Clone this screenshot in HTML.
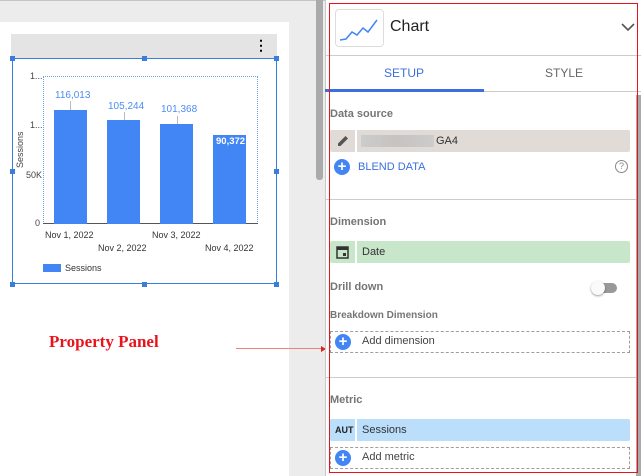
<!DOCTYPE html>
<html><head><meta charset="utf-8"><style>
*{margin:0;padding:0;box-sizing:border-box}
body{width:641px;height:476px;overflow:hidden;position:relative;background:#ececec;font-family:"Liberation Sans",Arial,sans-serif}
.a{position:absolute}
.t{position:absolute;white-space:nowrap}
.h{position:absolute;width:5px;height:5px;background:#3b7ddd}
.lbl{position:absolute;color:#757575;font-size:11px;font-weight:bold;left:330px;white-space:nowrap}
.plus{position:absolute;width:16px;height:16px;border-radius:50%;background:#4285f4;color:#fff;font-size:15px;line-height:16px;text-align:center;font-weight:bold}
.dash{position:absolute;left:330px;width:300px;height:22px;border:1px dashed #9e9e9e}
</style></head><body>
<div class="a" style="left:0;top:0;width:641px;height:1px;background:#c4c4c4"></div>
<div class="a" style="left:0;top:22px;width:289px;height:454px;background:#fff"></div>
<div class="a" style="left:316px;top:0;width:7px;height:180px;background:#aaa;border-radius:0 0 3px 3px"></div>
<!-- chart -->
<div class="a" style="left:11px;top:34px;width:266px;height:24px;background:#e4e4e4"></div>
<div class="t" style="left:254px;top:38px;font-size:14px;font-weight:bold;line-height:14px">⋮</div>
<div class="a" style="left:12px;top:58px;width:265px;height:226px;border:1px solid #3b7ddd"></div>
<div class="h" style="left:10px;top:56px"></div><div class="h" style="left:142px;top:56px"></div><div class="h" style="left:274px;top:56px"></div>
<div class="h" style="left:10px;top:169px"></div><div class="h" style="left:274px;top:169px"></div>
<div class="h" style="left:10px;top:282px"></div><div class="h" style="left:142px;top:282px"></div><div class="h" style="left:274px;top:282px"></div>
<div class="a" style="left:43px;top:76px;width:215px;height:148px;border:1px dotted #6fa0ee;border-bottom:none"></div>
<div class="a" style="left:43px;top:223px;width:215px;height:1px;background:#555"></div>
<div class="t" style="left:30px;top:71px;font-size:9px;color:#444">1...</div>
<div class="t" style="left:30px;top:120px;font-size:9px;color:#444">1...</div>
<div class="t" style="left:26px;top:170px;font-size:9px;color:#444">50K</div>
<div class="t" style="left:35px;top:218px;font-size:9px;color:#444">0</div>
<div class="t" style="left:2px;top:145px;width:36px;text-align:center;font-size:9px;color:#444;transform:rotate(-90deg)">Sessions</div>
<div class="a" style="left:54px;top:110px;width:33px;height:114px;background:#4285f4"></div>
<div class="a" style="left:107px;top:120px;width:33px;height:104px;background:#4285f4"></div>
<div class="a" style="left:160px;top:124px;width:33px;height:100px;background:#4285f4"></div>
<div class="a" style="left:213px;top:135px;width:33px;height:89px;background:#4285f4"></div>
<div class="a" style="left:70px;top:101px;width:1px;height:9px;background:#bbb"></div>
<div class="a" style="left:124px;top:112px;width:1px;height:8px;background:#bbb"></div>
<div class="a" style="left:177px;top:116px;width:1px;height:8px;background:#bbb"></div>
<div class="t" style="left:55px;top:90px;font-size:10px;color:#4c8df6">116,013</div>
<div class="t" style="left:108px;top:101px;font-size:10px;color:#4c8df6">105,244</div>
<div class="t" style="left:161px;top:104px;font-size:10px;color:#4c8df6">101,368</div>
<div class="t" style="left:216px;top:136px;font-size:9.5px;color:#fff;font-weight:bold">90,372</div>
<div class="t" style="left:45px;top:230px;font-size:9px;color:#333">Nov 1, 2022</div>
<div class="t" style="left:98px;top:243px;font-size:9px;color:#333">Nov 2, 2022</div>
<div class="t" style="left:152px;top:230px;font-size:9px;color:#333">Nov 3, 2022</div>
<div class="t" style="left:205px;top:243px;font-size:9px;color:#333">Nov 4, 2022</div>
<div class="a" style="left:43px;top:264px;width:18px;height:8px;background:#4285f4"></div>
<div class="t" style="left:65px;top:263px;font-size:9px;color:#333">Sessions</div>
<div class="t" style="left:49px;top:332px;font-family:'Liberation Serif',serif;font-weight:bold;font-size:17px;color:#e8141c">Property Panel</div>
<div class="a" style="left:236px;top:348px;width:86px;height:1px;background:#f08080"></div>
<div class="a" style="left:321px;top:346px;width:0;height:0;border-left:5px solid #e02020;border-top:3px solid transparent;border-bottom:3px solid transparent"></div>
<!-- panel -->
<div class="a" style="left:325px;top:0;width:316px;height:476px;background:#fff;border-left:1px solid #c8c8c8"></div>
<div class="a" style="left:636px;top:95px;width:5px;height:381px;background:#aaa"></div>
<div class="a" style="left:335px;top:9px;width:49px;height:38px;border:1px solid #ddd;border-radius:4px"></div>
<svg class="a" style="left:335px;top:9px" width="49" height="38"><polyline points="5,31 11,30 17,23 22,26 28,19 33,23 42,11" fill="none" stroke="#4285f4" stroke-width="1.5"/></svg>
<div class="t" style="left:390px;top:18px;font-size:16px;color:#222">Chart</div>
<svg class="a" style="left:621px;top:22px" width="14" height="10"><polyline points="1,2 7,8 13,2" fill="none" stroke="#555" stroke-width="1.6"/></svg>
<div class="a" style="left:325px;top:55px;width:316px;height:1px;background:#ccc"></div>
<div class="t" style="left:384px;top:66px;font-size:12px;color:#3b6fe0">SETUP</div>
<div class="t" style="left:545px;top:66px;font-size:12px;color:#666">STYLE</div>
<div class="a" style="left:325px;top:91px;width:316px;height:1px;background:#ccc"></div>
<div class="a" style="left:325px;top:89px;width:159px;height:3px;background:#3b6fe0"></div>
<div class="lbl" style="top:108px">Data source</div>
<div class="a" style="left:330px;top:130px;width:300px;height:22px;background:#e0dbd7;border-radius:2px"></div>
<div class="a" style="left:355px;top:130px;width:2px;height:22px;background:#fff"></div>
<div class="a" style="left:361px;top:135px;width:73px;height:12px;background:linear-gradient(90deg,#ccc,#c6c3c0,#ccc)"></div>
<svg class="a" style="left:336px;top:134px" width="14" height="14"><path d="M2 12 L2 9.5 L9.5 2 L12 4.5 L4.5 12 Z" fill="#555"/></svg>
<div class="t" style="left:436px;top:135px;font-size:11px;color:#333">GA4</div>
<div class="plus" style="left:334px;top:159px">+</div>
<div class="t" style="left:358px;top:161px;font-size:11px;color:#3b6fe0">BLEND DATA</div>
<div class="a" style="left:615px;top:160px;width:13px;height:13px;border:1px solid #888;border-radius:50%;font-size:9px;color:#888;text-align:center;line-height:11px">?</div>
<div class="a" style="left:325px;top:199px;width:311px;height:1px;background:#ccc"></div>
<div class="lbl" style="top:216px">Dimension</div>
<div class="a" style="left:330px;top:241px;width:300px;height:22px;background:#c8e6c9;border-radius:2px"></div>
<div class="a" style="left:355px;top:241px;width:2px;height:22px;background:#fff"></div>
<svg class="a" style="left:336px;top:245px" width="13" height="14"><rect x="1" y="2" width="11" height="11" fill="none" stroke="#333" stroke-width="1.5"/><rect x="1" y="2" width="11" height="3" fill="#333"/><rect x="7" y="8" width="3" height="3" fill="#333"/></svg>
<div class="t" style="left:362px;top:246px;font-size:11px;color:#333">Date</div>
<div class="lbl" style="top:281px">Drill down</div>
<div class="a" style="left:594px;top:283px;width:23px;height:10px;border-radius:5px;background:#999"></div>
<div class="a" style="left:591px;top:281px;width:14px;height:14px;border-radius:50%;background:#fafafa;box-shadow:0 1px 2px rgba(0,0,0,.4)"></div>
<div class="lbl" style="top:310px;font-size:10px">Breakdown Dimension</div>
<div class="dash" style="top:331px"></div>
<div class="plus" style="left:335px;top:334px">+</div>
<div class="t" style="left:362px;top:335px;font-size:11px;color:#444">Add dimension</div>
<div class="a" style="left:325px;top:377px;width:311px;height:1px;background:#ccc"></div>
<div class="lbl" style="top:394px">Metric</div>
<div class="a" style="left:330px;top:419px;width:300px;height:22px;background:#bbdefb;border-radius:2px"></div>
<div class="a" style="left:355px;top:419px;width:2px;height:22px;background:#fff"></div>
<div class="t" style="left:335px;top:425px;font-size:9px;font-weight:bold;color:#222">AUT</div>
<div class="t" style="left:362px;top:424px;font-size:11px;color:#333">Sessions</div>
<div class="dash" style="top:447px"></div>
<div class="plus" style="left:335px;top:450px">+</div>
<div class="t" style="left:362px;top:451px;font-size:11px;color:#444">Add metric</div>
<div class="a" style="left:329px;top:3px;width:309px;height:470px;border:1px solid #e8141c"></div>
</body></html>
